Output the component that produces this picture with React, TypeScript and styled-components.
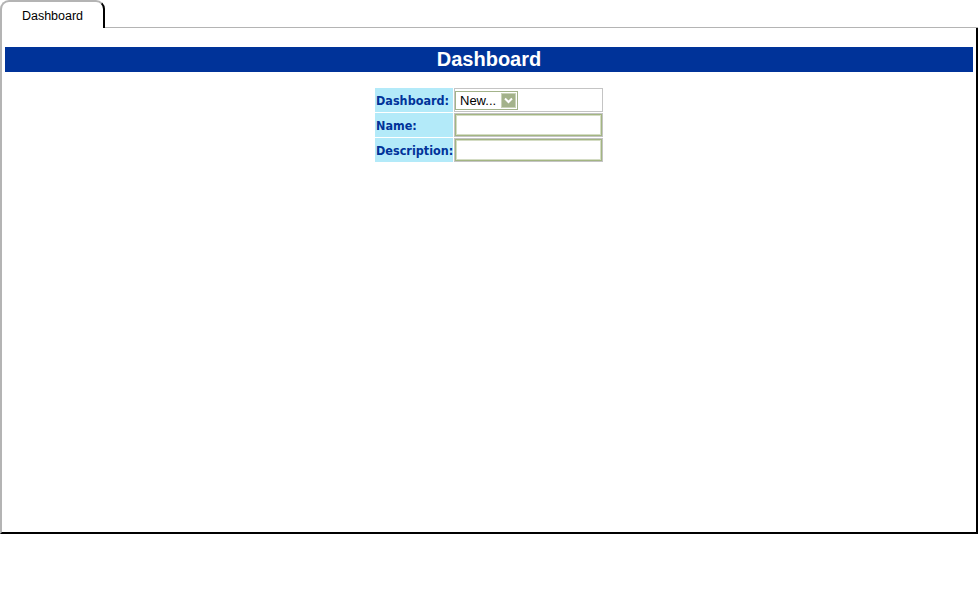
import styled, { createGlobalStyle } from "styled-components";

const Global = createGlobalStyle`
  html, body {
    margin: 0;
    padding: 0;
    background: #ffffff;
    font-family: "Liberation Sans", Arial, sans-serif;
  }
`;

const Page = styled.div`
  width: 978px;
  height: 600px;
  display: flex;
  flex-direction: column;
`;

const TabStrip = styled.div`
  display: flex;
  align-items: flex-start;
  height: 28px;
`;

const Tab = styled.div`
  width: 105px;
  height: 28px;
  box-sizing: border-box;
  border-left: 2px solid #b4b4b4;
  border-top: 2px solid #b4b4b4;
  border-right: 2px solid #000000;
  border-top-left-radius: 9px;
  border-top-right-radius: 9px;
  background: #ffffff;
  text-align: center;
  font-size: 12.5px;
  line-height: 28px;
  color: #000;
`;

const StripRest = styled.div`
  flex: 1;
  height: 27px;
  border-bottom: 1px solid #b4b4b4;
`;

const Panel = styled.div`
  width: 978px;
  height: 506px;
  box-sizing: border-box;
  border-left: 2px solid #b4b4b4;
  border-right: 2px solid #000;
  border-bottom: 2px solid #000;
  padding: 19px 3px 0 3px;
  display: flex;
  flex-direction: column;
  align-items: stretch;
`;

const HeaderBar = styled.div`
  height: 25px;
  background: #003399;
  color: #fff;
  font-weight: bold;
  font-size: 20px;
  text-align: center;
  line-height: 25px;
`;

const FormTable = styled.table`
  margin: 15px auto 0 auto;
  border-collapse: separate;
  border-spacing: 1px;
  background: #ffffff;
  padding: 0;
  table-layout: fixed;
  width: 229px;
`;

const LabelCol = styled.col`
  width: 78px;
`;

const FieldCol = styled.col`
  width: 149px;
`;

const Label = styled.td`
  background: #b3eaf9;
  color: #003399;
  font-family: "DejaVu Sans Condensed", "DejaVu Sans", Verdana, sans-serif;
  font-weight: bold;
  font-size: 12.5px;
  padding: 0 0 0 1px;
  height: 24px;
  box-sizing: border-box;
  white-space: nowrap;
  overflow: hidden;
`;

const Field = styled.td`
  border: 1px solid #c4c4c4;
  padding: 0 1px 0 0;
  height: 24px;
  box-sizing: border-box;
`;

const SelectBox = styled.div`
  display: flex;
  align-items: center;
  height: 19px;
  width: 63px;
  box-sizing: border-box;
  border: 1px solid #a3b38a;
  padding: 1px;
  font-size: 13px;
  color: #000;
  justify-content: space-between;
`;

const SelectText = styled.span`
  padding-left: 3px;
`;

const Arrow = styled.span`
  width: 15px;
  height: 15px;
  background: #a3b28a;
  border: 1px solid #c9d3b8;
  box-sizing: border-box;
  display: flex;
  align-items: center;
  justify-content: center;
`;

const TextInput = styled.input`
  display: block;
  width: 147px;
  height: 22px;
  box-sizing: border-box;
  border: 1px solid #a3b583;
  box-shadow: inset 0 0 0 1px #d4dcc4;
  outline: none;
  margin: 0;
  padding: 0 2px;
  font-size: 13px;
  font-family: "Liberation Sans", Arial, sans-serif;
`;

export default function App() {
  return (
    <Page>
      <Global />
      <TabStrip>
        <Tab>Dashboard</Tab>
        <StripRest />
      </TabStrip>
      <Panel>
        <HeaderBar>Dashboard</HeaderBar>
        <FormTable>
          <colgroup>
            <LabelCol />
            <FieldCol />
          </colgroup>
          <tbody>
            <tr>
              <Label>Dashboard:</Label>
              <Field>
                <SelectBox>
                  <SelectText>New...</SelectText>
                  <Arrow>
                    <svg width="9" height="7" viewBox="0 0 9 7">
                      <path d="M1 1.5 L4.5 5 L8 1.5" fill="none" stroke="#fff" strokeWidth="2" />
                    </svg>
                  </Arrow>
                </SelectBox>
              </Field>
            </tr>
            <tr>
              <Label>Name:</Label>
              <Field>
                <TextInput />
              </Field>
            </tr>
            <tr>
              <Label>Description:</Label>
              <Field>
                <TextInput />
              </Field>
            </tr>
          </tbody>
        </FormTable>
      </Panel>
    </Page>
  );
}
